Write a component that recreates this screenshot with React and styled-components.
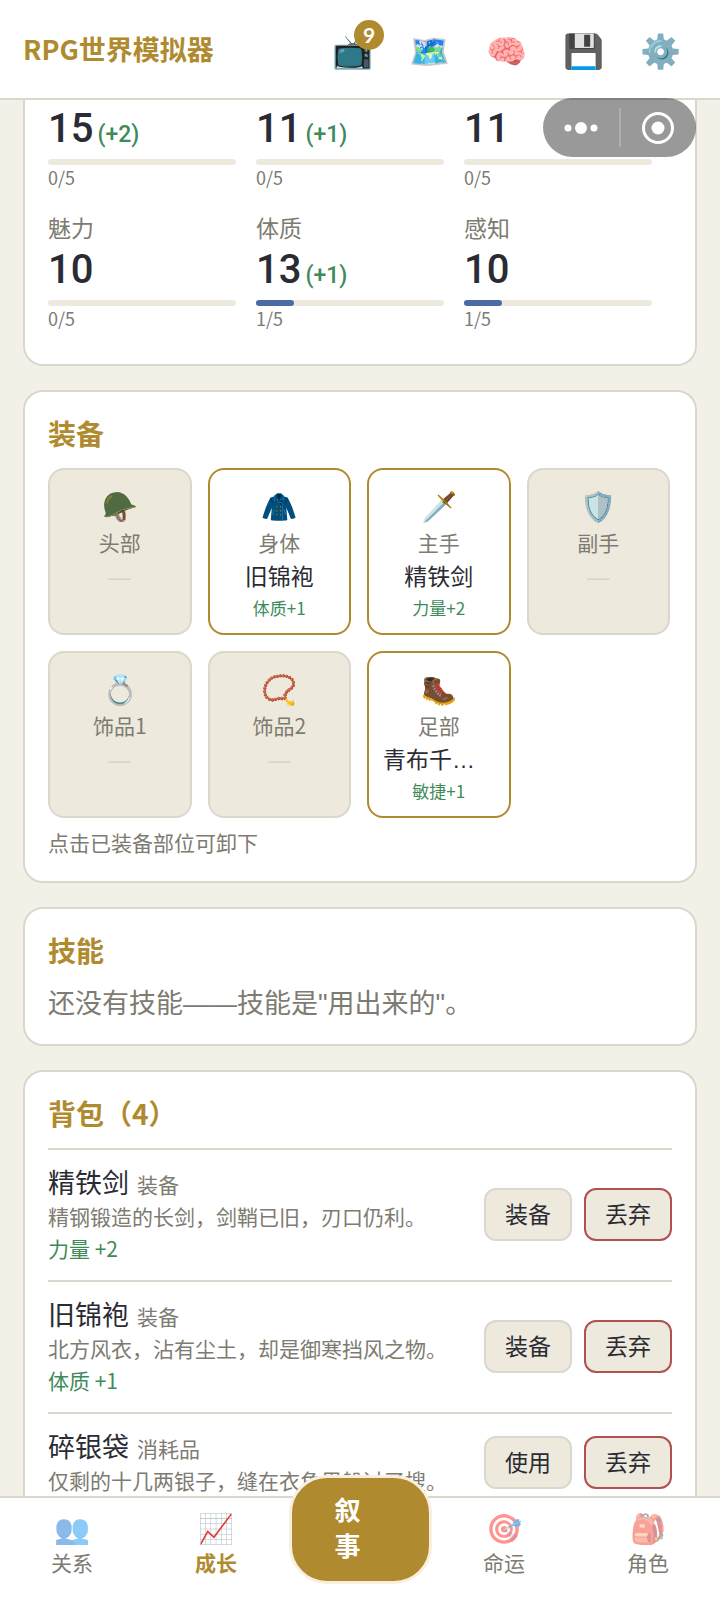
import React from "react";
import styled, { createGlobalStyle, css } from "styled-components";

const gold = "#b08a2e";
const line = "#dad7cc";
const sand = "#ede9dc";
const ink = "#2b2b33";
const muted = "#7d7b72";
const green = "#3f8a59";

const GlobalStyle = createGlobalStyle`
  * { box-sizing: border-box; }
  body { margin: 0; background: #f3f0e7; color: ${ink}; font-family: "Noto Sans CJK SC", "Noto Sans", sans-serif; }
  button { font-family: inherit; color: inherit; cursor: pointer; }
  h1, h2, p, ul { margin: 0; padding: 0; }
`;

const Shell = styled.div`
  height: 100vh;
  display: flex;
  flex-direction: column;
`;

const Header = styled.header`
  flex: none;
  height: 100px;
  padding: 0 33px 0 23px;
  display: flex;
  align-items: center;
  justify-content: space-between;
  background: #fff;
  border-bottom: 2px solid ${line};
`;

const AppTitle = styled.h1`
  font-size: 27px;
  line-height: 36px;
  font-weight: 700;
  color: ${gold};
`;

const Tools = styled.div`
  display: flex;
  gap: 23px;
`;

const ToolButton = styled.button`
  position: relative;
  width: 54px;
  height: 54px;
  padding: 0;
  border: 0;
  background: none;
  display: flex;
  align-items: center;
  justify-content: center;
`;

const Badge = styled.span`
  position: absolute;
  top: -2px;
  right: -5px;
  width: 30px;
  height: 30px;
  border-radius: 50%;
  background: ${gold};
  color: #fff;
  font-family: Lato, sans-serif;
  font-size: 21px;
  line-height: 30px;
  font-weight: 700;
  text-align: center;
`;

const Emoji = styled.span`
  font-size: ${(p) => p.$size}px;
  line-height: 40px;
`;

const Main = styled.main`
  flex: 1;
  min-height: 0;
  padding: 0 23px;
  overflow-y: auto;
  scrollbar-width: none;
`;

const Card = styled.section`
  margin-bottom: 24px;
  padding: 23px;
  background: #fff;
  border: 2px solid ${line};
  border-radius: 20px;
  ${(p) => p.$cut && css`
    padding: 2px 23px 32px;
    border-top: 0;
    border-radius: 0 0 20px 20px;
  `}
`;

const CardTitle = styled.h2`
  margin-bottom: 17px;
  font-size: 28px;
  line-height: 36px;
  font-weight: 700;
  text-spacing-trim: space-all;
  color: ${gold};
`;

const StatGrid = styled.div`
  display: grid;
  grid-template-columns: repeat(3, 1fr);
  row-gap: 22px;
`;

const Stat = styled.div`
  padding-right: 20px;
`;

const StatLabel = styled.div`
  font-size: 23px;
  line-height: 28px;
  padding-bottom: 2px;
  color: ${muted};
`;

const StatValue = styled.div`
  height: 48px;
  margin-bottom: 9px;
  font-family: Roboto, sans-serif;
  font-size: 40px;
  line-height: 54px;
  font-weight: 500;
`;

const StatBonus = styled.span`
  margin-left: 4px;
  font-size: 23px;
  font-weight: 500;
  color: ${green};
`;

const Track = styled.div`
  height: 6px;
  border-radius: 3px;
  background: ${sand};
`;

const Fill = styled.div`
  height: 6px;
  border-radius: 3px;
  background: #4a6ba5;
`;

const StatProgress = styled.div`
  padding-bottom: 2px;
  font-size: 18px;
  line-height: 24px;
  color: ${muted};
`;

const Slots = styled.div`
  display: flex;
  flex-wrap: wrap;
  gap: 16px;
`;

const Slot = styled.button`
  width: 23%;
  padding: 14px 14px 13px;
  display: flex;
  flex-direction: column;
  align-items: center;
  justify-content: flex-start;
  border: 2px solid ${(p) => (p.$filled ? gold : line)};
  border-radius: 16px;
  background: ${(p) => (p.$filled ? "#fff" : sand)};
`;

const SlotIcon = styled.span`
  height: 42px;
  display: flex;
  align-items: flex-start;
`;

const SlotLabel = styled.span`
  font-size: 21px;
  line-height: 32px;
  color: ${muted};
`;

const SlotName = styled.span`
  max-width: 100%;
  height: 38px;
  font-family: "Liberation Sans", "Noto Sans CJK SC", sans-serif;
  font-size: 23px;
  line-height: 38px;
  text-align: left;
  white-space: nowrap;
  overflow: hidden;
  text-overflow: ellipsis;
  color: ${(p) => (p.$empty ? "#d8d4c6" : ink)};
`;

const SlotBonus = styled.span`
  height: 24px;
  font-size: 17px;
  line-height: 24px;
  color: ${green};
`;

const Hint = styled.p`
  margin-top: 8px;
  font-size: 21px;
  line-height: 32px;
  color: ${muted};
`;

const Note = styled.p`
  height: 36px;
  font-family: "Liberation Sans", "Noto Sans CJK SC", sans-serif;
  font-size: 27px;
  line-height: 38px;
  color: ${muted};
`;

const Bag = styled.ul`
  list-style: none;
`;

const BagItem = styled.li`
  display: flex;
  align-items: center;
  gap: 12px;
  padding: 14px 0 16px;
  border-top: 2px solid ${line};
`;

const ItemText = styled.div`
  flex: 1;
  min-width: 0;
`;

const ItemName = styled.div`
  height: 36px;
  display: flex;
  align-items: baseline;
  gap: 8px;
  font-size: 27px;
  line-height: 36px;
`;

const ItemKind = styled.span`
  font-size: 21px;
  line-height: 32px;
  color: ${muted};
`;

const ItemLine = styled.p`
  font-size: 21px;
  line-height: 32px;
  color: ${(p) => (p.$bonus ? green : muted)};
`;

const ActionButton = styled.button`
  flex: none;
  width: 88px;
  height: 53px;
  padding: 0 0 2px;
  font-size: 23px;
  line-height: 32px;
  border: 2px solid ${(p) => (p.$danger ? "#b0504f" : line)};
  border-radius: 12px;
  background: ${sand};
`;

const Nav = styled.nav`
  flex: none;
  height: 105px;
  display: flex;
  align-items: flex-start;
  background: #fff;
  border-top: 2px solid ${line};
`;

const NavSlot = styled.div`
  flex: 1;
  display: flex;
  justify-content: center;
`;

const NavLink = styled.a`
  flex: 1;
  padding-top: 8px;
  display: flex;
  flex-direction: column;
  align-items: center;
  font-size: 21px;
  line-height: 32px;
  text-decoration: none;
  color: ${(p) => (p.$active ? gold : muted)};
  font-weight: ${(p) => (p.$active ? 700 : 400)};
`;

const NavIcon = styled.span`
  height: 40px;
  display: flex;
  opacity: ${(p) => (p.$active ? 1 : 0.5)};
`;

const StoryButton = styled.button`
  position: relative;
  width: 143px;
  height: 109px;
  margin-top: -23px;
  padding: 0 55px 5px 43px;
  border: 3px solid #f8efe0;
  border-radius: 38px;
  background: ${gold};
  color: #fff;
  font-size: 26px;
  line-height: 36px;
  font-weight: 700;
  text-align: left;
`;

const Capsule = styled.div`
  position: fixed;
  top: 98px;
  right: 24px;
  width: 153px;
  height: 59px;
  display: flex;
  border-radius: 30px;
  background: rgba(0, 0, 0, 0.4);
`;

const CapsuleButton = styled.button`
  flex: 1;
  padding: 0;
  border: 0;
  background: none;
  display: flex;
  align-items: center;
  justify-content: center;
`;

const CapsuleRule = styled.span`
  width: 2px;
  margin: 10px 0;
  background: rgba(255, 255, 255, 0.2);
`;

const tools = [["📺", "电视", 9], ["🗺️", "地图"], ["🧠", "记忆"], ["💾", "存档"], ["⚙️", "设置"]];

const stats = [
  { value: 15, bonus: 2, done: 0 },
  { value: 11, bonus: 1, done: 0 },
  { value: 11, done: 0 },
  { label: "魅力", value: 10, done: 0 },
  { label: "体质", value: 13, bonus: 1, done: 1 },
  { label: "感知", value: 10, done: 1 },
];

const slots = [
  ["🪖", "头部"],
  ["🧥", "身体", "旧锦袍", "体质+1"],
  ["🗡️", "主手", "精铁剑", "力量+2"],
  ["🛡️", "副手"],
  ["💍", "饰品1"],
  ["📿", "饰品2"],
  ["🥾", "足部", "青布千层靴", "敏捷+1"],
];

const bag = [
  { name: "精铁剑", kind: "装备", text: "精钢锻造的长剑，剑鞘已旧，刃口仍利。", bonus: "力量 +2", action: "装备" },
  { name: "旧锦袍", kind: "装备", text: "北方风衣，沾有尘土，却是御寒挡风之物。", bonus: "体质 +1", action: "装备" },
  { name: "碎银袋", kind: "消耗品", text: "仅剩的十几两银子，缝在衣角里躲过了搜。", action: "使用" },
];

function NavEntry({ icon, label, active }) {
  return (
    <NavLink href="#" $active={active}>
      <NavIcon $active={active}><Emoji $size={29}>{icon}</Emoji></NavIcon>
      {label}
    </NavLink>
  );
}

export default function App() {
  return (
    <Shell lang="zh-CN">
      <GlobalStyle />
      <Header>
        <AppTitle>RPG世界模拟器</AppTitle>
        <Tools>
          {tools.map(([icon, label, count]) => (
            <ToolButton key={label} aria-label={label}>
              <Emoji $size={33}>{icon}</Emoji>
              {count && <Badge>{count}</Badge>}
            </ToolButton>
          ))}
        </Tools>
      </Header>

      <Main>
        <Card $cut>
          <StatGrid>
            {stats.map((s, i) => (
              <Stat key={i}>
                {s.label && <StatLabel>{s.label}</StatLabel>}
                <StatValue>
                  {s.value}
                  {s.bonus && <StatBonus>(+{s.bonus})</StatBonus>}
                </StatValue>
                <Track>{s.done > 0 && <Fill style={{ width: `${s.done * 20}%` }} />}</Track>
                <StatProgress>{s.done}/5</StatProgress>
              </Stat>
            ))}
          </StatGrid>
        </Card>

        <Card>
          <CardTitle>装备</CardTitle>
          <Slots>
            {slots.map(([icon, label, name, bonus]) => (
              <Slot key={label} $filled={!!name}>
                <SlotIcon><Emoji $size={29}>{icon}</Emoji></SlotIcon>
                <SlotLabel>{label}</SlotLabel>
                <SlotName $empty={!name}>{name || "—"}</SlotName>
                <SlotBonus>{bonus}</SlotBonus>
              </Slot>
            ))}
          </Slots>
          <Hint>点击已装备部位可卸下</Hint>
        </Card>

        <Card>
          <CardTitle>技能</CardTitle>
          <Note>还没有技能——技能是"用出来的"。</Note>
        </Card>

        <Card>
          <CardTitle>背包（4）</CardTitle>
          <Bag>
            {bag.map((b) => (
              <BagItem key={b.name}>
                <ItemText>
                  <ItemName>{b.name}<ItemKind>{b.kind}</ItemKind></ItemName>
                  <ItemLine>{b.text}</ItemLine>
                  {b.bonus && <ItemLine $bonus>{b.bonus}</ItemLine>}
                </ItemText>
                <ActionButton>{b.action}</ActionButton>
                <ActionButton $danger>丢弃</ActionButton>
              </BagItem>
            ))}
          </Bag>
        </Card>
      </Main>

      <Nav>
        <NavEntry icon="👥" label="关系" />
        <NavEntry icon="📈" label="成长" active />
        <NavSlot><StoryButton>叙事</StoryButton></NavSlot>
        <NavEntry icon="🎯" label="命运" />
        <NavEntry icon="🎒" label="角色" />
      </Nav>

      <Capsule>
        <CapsuleButton aria-label="更多">
          <svg width="34" height="14" viewBox="0 0 34 14" fill="#fff">
            <circle cx="4" cy="7" r="3.5" /><circle cx="17" cy="7" r="6" /><circle cx="30" cy="7" r="3.5" />
          </svg>
        </CapsuleButton>
        <CapsuleRule />
        <CapsuleButton aria-label="关闭">
          <svg width="34" height="34" viewBox="0 0 34 34">
            <circle cx="17" cy="17" r="14.5" fill="none" stroke="#fff" strokeWidth="3" />
            <circle cx="17" cy="17" r="6.5" fill="#fff" />
          </svg>
        </CapsuleButton>
      </Capsule>
    </Shell>
  );
}
